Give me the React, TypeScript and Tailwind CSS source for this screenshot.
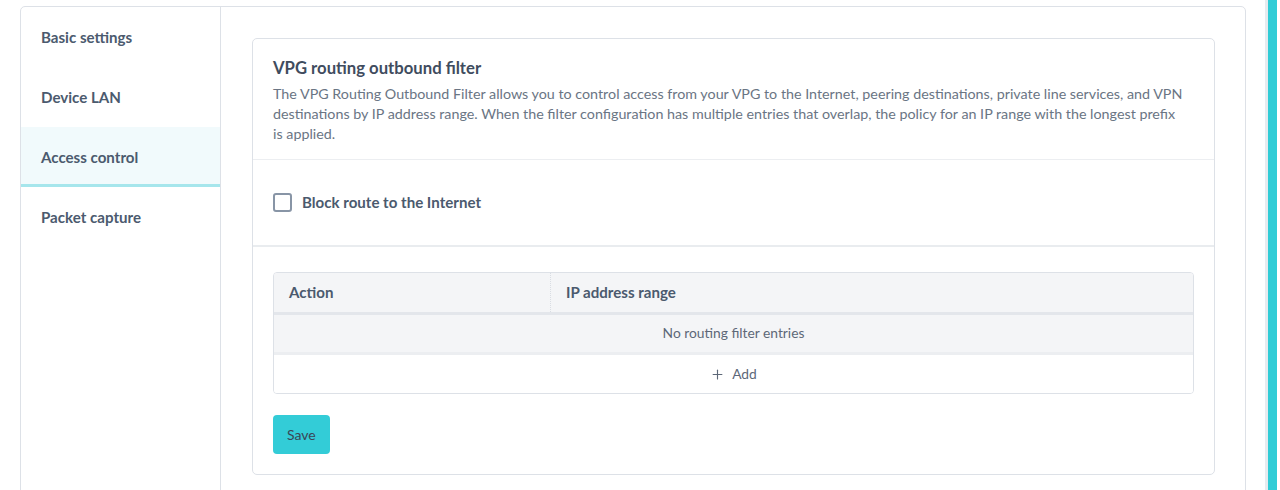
import React from "react";
import { Plus } from "lucide-react";

const NAV = ["Basic settings", "Device LAN", "Access control", "Packet capture"];

function SideNav({ active }: { active: string }) {
  return (
    <nav className="w-[200px] shrink-0 border-r border-[#dde1e7]">
      {NAV.map((label) => {
        const on = label === active;
        return (
          <div
            key={label}
            className={
              on
                ? "flex h-[60px] items-center border-b-[3px] border-[#a6e6ec] bg-[#f1fafc] pl-5 pt-[4px] text-[15.1px] font-bold text-[#4b5a6e]"
                : "flex h-[60px] items-center pl-5 pt-[1px] text-[15.1px] font-bold text-[#4b5a6e]"
            }
          >
            {label}
          </div>
        );
      })}
    </nav>
  );
}

function FilterTable() {
  return (
    <div className="overflow-hidden rounded-[4px] border border-[#dde1e7]">
      <div className="flex h-[42px] border-b-[3px] border-[#e3e6eb] bg-[#f4f5f7] text-[15.1px] font-bold text-[#4b5a6e]">
        <div className="flex w-[277px] items-center border-r border-dotted border-[#d9dde3] pl-[15px]">Action</div>
        <div className="flex flex-1 items-center pl-[15px]">IP address range</div>
      </div>
      <div className="flex h-[40px] items-center justify-center border-b-[3px] border-[#eceef1] bg-[#f4f5f7] text-[13.8px] text-[#5d6878]">
        No routing filter entries
      </div>
      <button className="flex h-[38px] w-full items-center justify-center gap-[7px] bg-white text-[13.8px] text-[#5d6878]">
        <Plus size={15} strokeWidth={1.8} />
        Add
      </button>
    </div>
  );
}

export default function App() {
  return (
    <div
      className="relative h-[490px] overflow-hidden bg-white pl-5 pr-[34px] pt-[6px]"
      style={{ fontFamily: "Lato, 'Noto Sans', sans-serif" }}
    >
      <div className="flex h-[520px] rounded-[5px] border border-[#dde1e7] bg-white">
        <SideNav active="Access control" />
        <main className="flex-1 pl-[31px] pr-[30px] pt-[31px]">
          <section className="rounded-[5px] border border-[#dde1e7]">
            <div className="border-b border-[#eceef1] px-5 pb-[15px] pt-[19px]">
              <h2 className="text-[16.7px] font-bold leading-5 text-[#3f4c5e]">VPG routing outbound filter</h2>
              <p className="mt-[6px] text-[14.3px] leading-5 text-[#6a7584]">
                The VPG Routing Outbound Filter allows you to control access from your VPG to the Internet, peering
                destinations, private line services, and VPN destinations by IP address range. When the filter
                configuration has multiple entries that overlap, the policy for an IP range with the longest prefix
                <br />
                is applied.
              </p>
            </div>
            <div className="flex h-[87px] items-center gap-[10px] border-b-2 border-[#e9ecef] px-5">
              <span className="h-[19px] w-[19px] rounded-[3px] border-2 border-[#8895a6] bg-white" />
              <span className="text-[15.1px] font-bold text-[#4b5a6e]">Block route to the Internet</span>
            </div>
            <div className="px-5 pb-5 pt-[25px]">
              <FilterTable />
              <button className="mt-[21px] h-[39px] rounded-[4px] bg-[#33ccd7] px-[14px] text-[14px] text-[#3a4656]">
                Save
              </button>
            </div>
          </section>
        </main>
      </div>
      <div className="absolute right-[3px] top-0 h-full w-[12px] border-l-[3px] border-[#e7ebef] bg-[#31ccd6]" />
    </div>
  );
}
